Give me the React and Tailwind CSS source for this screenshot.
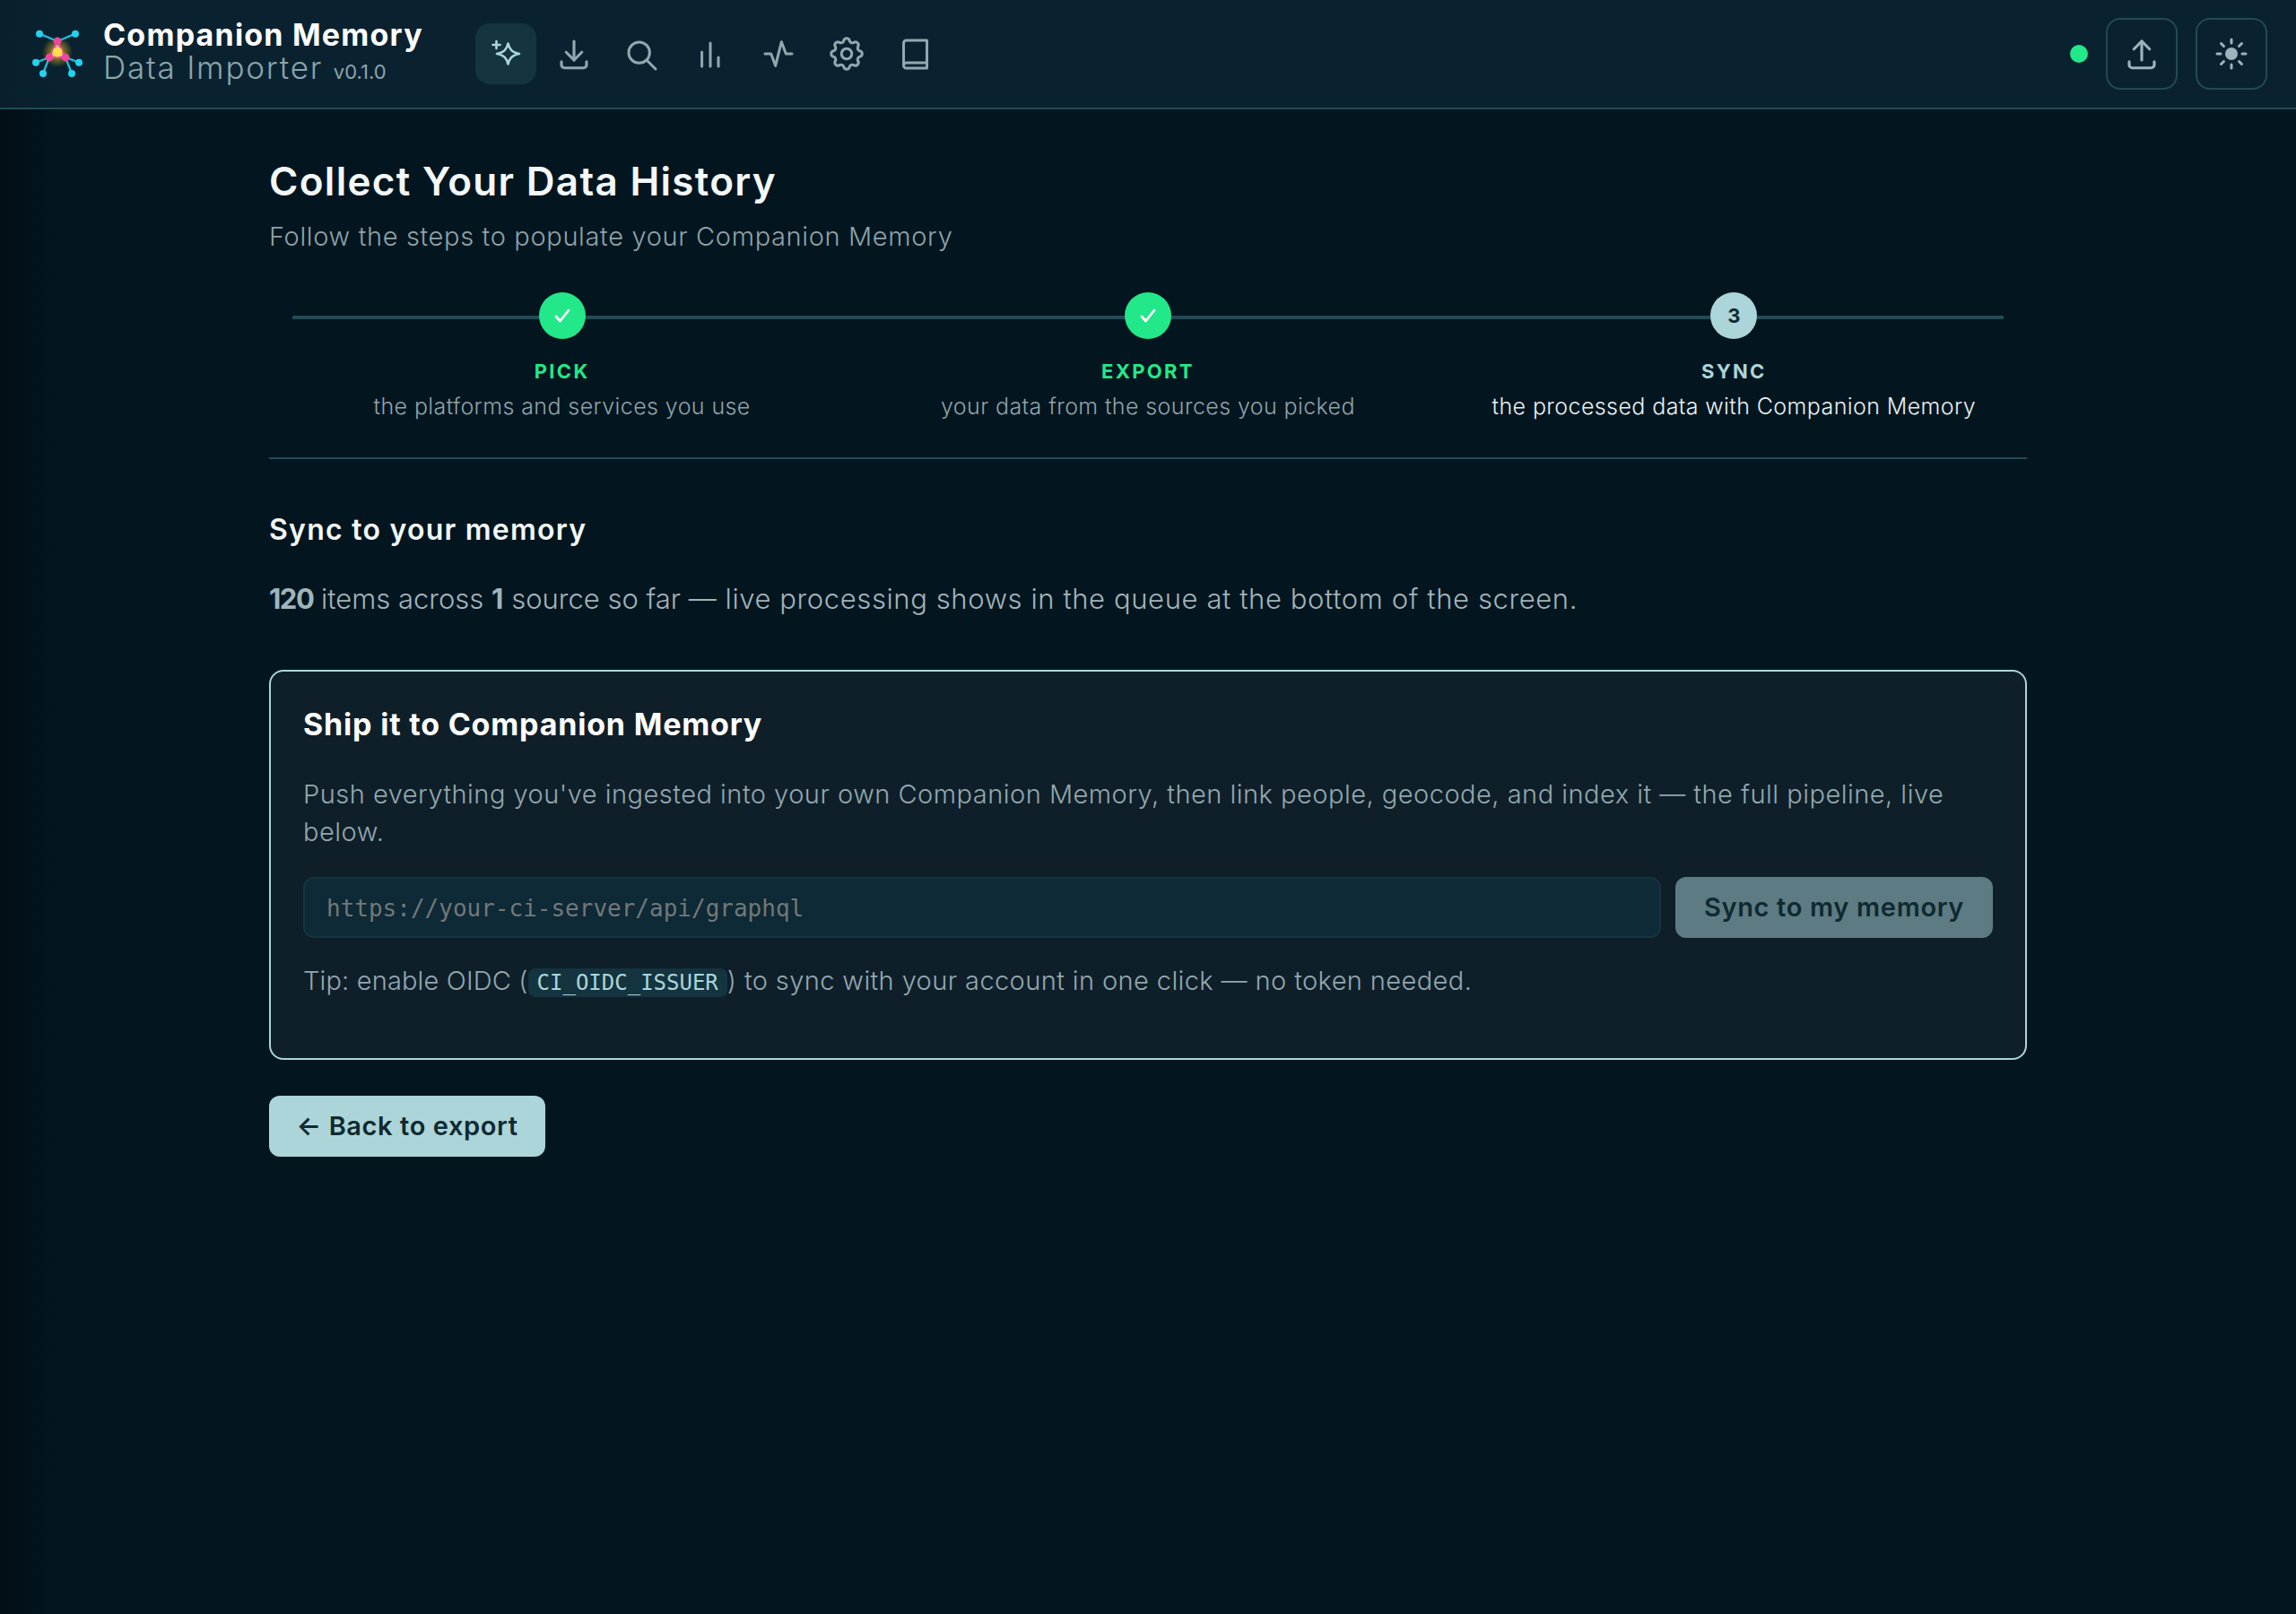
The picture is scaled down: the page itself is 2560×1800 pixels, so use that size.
import React from "react";
import { TbDownload, TbSearch, TbActivity, TbSettings, TbUpload } from "react-icons/tb";

const sans = "font-['Inter','Liberation_Sans',sans-serif]";
const mono = "font-['DejaVu_Sans_Mono','Liberation_Mono',monospace]";

function Logo() {
  return (
    <svg width="64" height="64" viewBox="32 32 64 64" className="shrink-0">
      <defs>
        <radialGradient id="glow">
          <stop offset="0%" stopColor="#facc15" stopOpacity="0.8" />
          <stop offset="100%" stopColor="#facc15" stopOpacity="0" />
        </radialGradient>
      </defs>
      <circle cx="64" cy="62" r="17" fill="url(#glow)" />
      <g stroke="#22b8d8" strokeWidth="2.4">
        <path d="M64 50L44 41.7M64 50L84 41.7M55 68L40 73.7M55 68L48 86M73 68L88 73.7M73 68L80 86" />
      </g>
      <path d="M64 50L55 68L73 68Z" fill="#f9a8a0" stroke="#ec4899" strokeWidth="2" />
      <g fill="#22d3ee">
        <circle cx="44" cy="41.7" r="4" />
        <circle cx="84" cy="41.7" r="4" />
        <circle cx="40" cy="73.7" r="4" />
        <circle cx="88" cy="73.7" r="4" />
        <circle cx="48" cy="86" r="4" />
        <circle cx="80" cy="86" r="4" />
      </g>
      <g fill="#ec4899">
        <circle cx="64" cy="50" r="4.4" />
        <circle cx="55" cy="68" r="4.4" />
        <circle cx="73" cy="68" r="4.4" />
      </g>
      <circle cx="64" cy="62" r="5.4" fill="#fde047" />
    </svg>
  );
}

function SparkIcon() {
  return (
    <svg width="36" height="36" viewBox="0 0 36 36" fill="none" stroke="currentColor" strokeWidth="2.6" strokeLinejoin="round" strokeLinecap="round" className="overflow-visible">
      <path d="M20.5 6.5c1.4 6 4 10 12.500 11.500c-8.500 1.500-11.100 5.500-12.500 11.500c-1.400-6-4-10-12.500-11.500c8.500-1.500 11.100-5.500 12.500-11.500Z" />
      <path d="M7.500 4v8M3.500 8h8" />
    </svg>
  );
}

function BarsIcon() {
  return (
    <svg width="36" height="36" viewBox="0 0 36 36" fill="none" stroke="currentColor" strokeWidth="3" strokeLinecap="round">
      <path d="M18 6v26M8.600 16v16M27 22v10" />
    </svg>
  );
}

function BookIcon() {
  return (
    <svg width="36" height="36" viewBox="0 0 36 36" fill="none" stroke="currentColor" strokeWidth="3" strokeLinejoin="round" strokeLinecap="round">
      <path d="M5.500 6a3 3 0 0 1 3-3h23v31H8.500a3 3 0 0 1-3-3Z" />
      <path d="M5.500 31a3 3 0 0 1 3-3h23" />
    </svg>
  );
}

function SunIcon() {
  return (
    <svg width="36" height="36" viewBox="0 0 36 36" fill="none" stroke="currentColor" strokeWidth="3" strokeLinecap="round">
      <circle cx="18" cy="18" r="7" fill="currentColor" stroke="none" />
      <path d="M18 2v4M18 30v4M2 18h4M30 18h4M6.500 6.500l3 3M26.500 26.500l3 3M6.500 29.500l3-3M26.500 9.500l3-3" />
    </svg>
  );
}

function CheckIcon() {
  return (
    <svg width="24" height="24" viewBox="0 0 24 24" fill="none" stroke="#ffffff" strokeWidth="2.800" strokeLinecap="round" strokeLinejoin="round">
      <path d="M5 13l4.500 5l9.500-12" />
    </svg>
  );
}

function Step({ label, desc, done, num, active }) {
  return (
    <div className="flex flex-col items-center relative">
      <div
        className={
          done
            ? "w-[52px] h-[52px] rounded-full flex items-center justify-center bg-[#22e88a]"
            : "w-[52px] h-[52px] rounded-full flex items-center justify-center bg-[#acd5d9] text-[#0f2a30] text-[22px] font-bold"
        }
      >
        {done ? <CheckIcon /> : num}
      </div>
      <div
        className={
          "mt-[22px] h-[28px] leading-[28px] text-[22px] font-bold tracking-[2.300px] " +
          (done ? "text-[#22e88a]" : "text-[#acd5d9]")
        }
      >
        {label}
      </div>
      <div
        className={
          "mt-[7px] h-[36px] leading-[36px] text-[25px] tracking-[0.400px] font-light whitespace-nowrap " +
          (active ? "text-[#e6f1f2]" : "text-[#8ea3a9]")
        }
      >
        {desc}
      </div>
    </div>
  );
}

export default function App() {
  const navBtn = "w-[68px] h-[68px] rounded-2xl flex items-center justify-center text-[#8fa9af]";
  const iconBtn = "w-[80px] h-[80px] rounded-2xl border-2 border-[#234a55] flex items-center justify-center text-[#9cb4ba]";
  return (
    <div className={"min-h-screen bg-[#03151f] bg-[linear-gradient(90deg,#020f17_0px,#03151f_70px)] text-white " + sans}>
      <header className="h-[122px] border-b-2 border-[#234a55] bg-[#0a2230] bg-[linear-gradient(90deg,#07202b_0px,#0a2230_70px)] flex items-center pl-[32px] pr-[32px]">
        <Logo />
        <div className="ml-[19px] flex flex-col">
          <div className="text-[34px] leading-[38px] font-bold tracking-[1.200px] text-white whitespace-nowrap">Companion Memory</div>
          <div className="-mt-[2px] mb-[2px] text-[35px] leading-[38px] font-light tracking-[1.800px] text-[#8ba5ab] whitespace-nowrap">
            Data Importer <span className="text-[22px] font-normal tracking-[0px]">v0.1.0</span>
          </div>
        </div>
        <nav className="ml-[58px] flex gap-[8px]">
          <div className={navBtn + " bg-[#14343f] text-[#acd5d9]"}><SparkIcon /></div>
          <div className={navBtn}><TbDownload size={42} strokeWidth={1.800} /></div>
          <div className={navBtn}><TbSearch size={40} strokeWidth={1.800} className="mt-[3px]" /></div>
          <div className={navBtn}><BarsIcon /></div>
          <div className={navBtn}><TbActivity size={40} strokeWidth={1.800} /></div>
          <div className={navBtn}><TbSettings size={46} strokeWidth={1.600} /></div>
          <div className={navBtn}><BookIcon /></div>
        </nav>
        <div className="ml-auto flex items-center">
          <div className="w-[20px] h-[20px] rounded-full bg-[#22e88a] mr-[20px]" />
          <div className={iconBtn + " mr-[20px]"}><TbUpload size={42} strokeWidth={1.800} /></div>
          <div className={iconBtn}><SunIcon /></div>
        </div>
      </header>

      <main className="w-[1960px] mx-auto">
        <h1 className="mt-[52px] h-[56px] leading-[56px] text-[44px] font-semibold tracking-[1.300px] text-[#f2f7f8]">
          Collect Your Data History
        </h1>
        <p className="mt-[14px] h-[40px] leading-[40px] text-[29px] font-light tracking-[0.650px] text-[#8ea3a9]">
          Follow the steps to populate your Companion Memory
        </p>

        <div className="mt-[42px] relative grid grid-cols-3 pb-[39px] border-b-2 border-[#234a55]">
          <div className="absolute left-[26px] right-[26px] top-[26px] h-[4px] bg-[#234a55]" />
          <Step label="PICK" desc="the platforms and services you use" done />
          <Step label="EXPORT" desc="your data from the sources you picked" done />
          <Step label="SYNC" desc="the processed data with Companion Memory" num="3" active />
        </div>

        <h2 className="mt-[59px] h-[40px] leading-[40px] text-[32px] font-semibold tracking-[1.250px] text-[#f2f7f8]">
          Sync to your memory
        </h2>
        <p className="mt-[35px] h-[44px] leading-[44px] text-[31px] font-light text-[#a0b4ba]">
          <b className="font-bold tracking-[-1.500px]">120</b> items across <b className="font-bold">1</b> source so far <span className="tracking-[0.600px]">— live processing shows in the queue at the bottom of the screen.</span>
        </p>

        <section className="mt-[57px] h-[435px] rounded-2xl border-2 border-[#acd5d9] bg-[#0f1f2a] pt-[37px] px-[36px]">
          <h3 className="h-[44px] leading-[44px] text-[34px] font-bold tracking-[0.800px] text-white">
            Ship it to Companion Memory
          </h3>
          <p className="mt-[35px] pr-[30px] leading-[42px] text-[29px] font-light tracking-[0.490px] text-[#93a8ae]">
            Push everything you've ingested into your own Companion Memory, then link people, geocode, and index it — the full pipeline, live below.
          </p>
          <div className="mt-[29px] flex gap-[16px]">
            <div className={"flex-1 h-[68px] rounded-xl border-2 border-[#163440] bg-[#0e2a36] pl-[24px] pt-[2px] flex items-center text-[26px] text-[#737878] " + mono}>
              https://your-ci-server/api/graphql
            </div>
            <button className="w-[354px] h-[68px] rounded-xl bg-[#5d7b83] text-[#0f2a30] text-[29px] font-semibold tracking-[0.670px]">
              Sync to my memory
            </button>
          </div>
          <p className="mt-[28px] h-[40px] leading-[40px] text-[29px] font-light tracking-[0.400px] text-[#93a8ae]">
            <span className="tracking-[0.150px]">Tip: enable OIDC (</span>
            <code className={"inline-block h-[32px] leading-[32px] px-[10px] rounded-lg bg-[#14343f] text-[#acd5d9] text-[24px] tracking-[0px] font-normal align-middle " + mono}>CI_OIDC_ISSUER</code>
            ) to sync with your account in one click — no token needed.
          </p>
        </section>

        <button className="mt-[40px] w-[308px] h-[68px] rounded-xl bg-[#acd5d9] text-[#0f2a30] text-[29px] font-semibold tracking-[0.600px]">
          ← Back to export
        </button>
      </main>
    </div>
  );
}
